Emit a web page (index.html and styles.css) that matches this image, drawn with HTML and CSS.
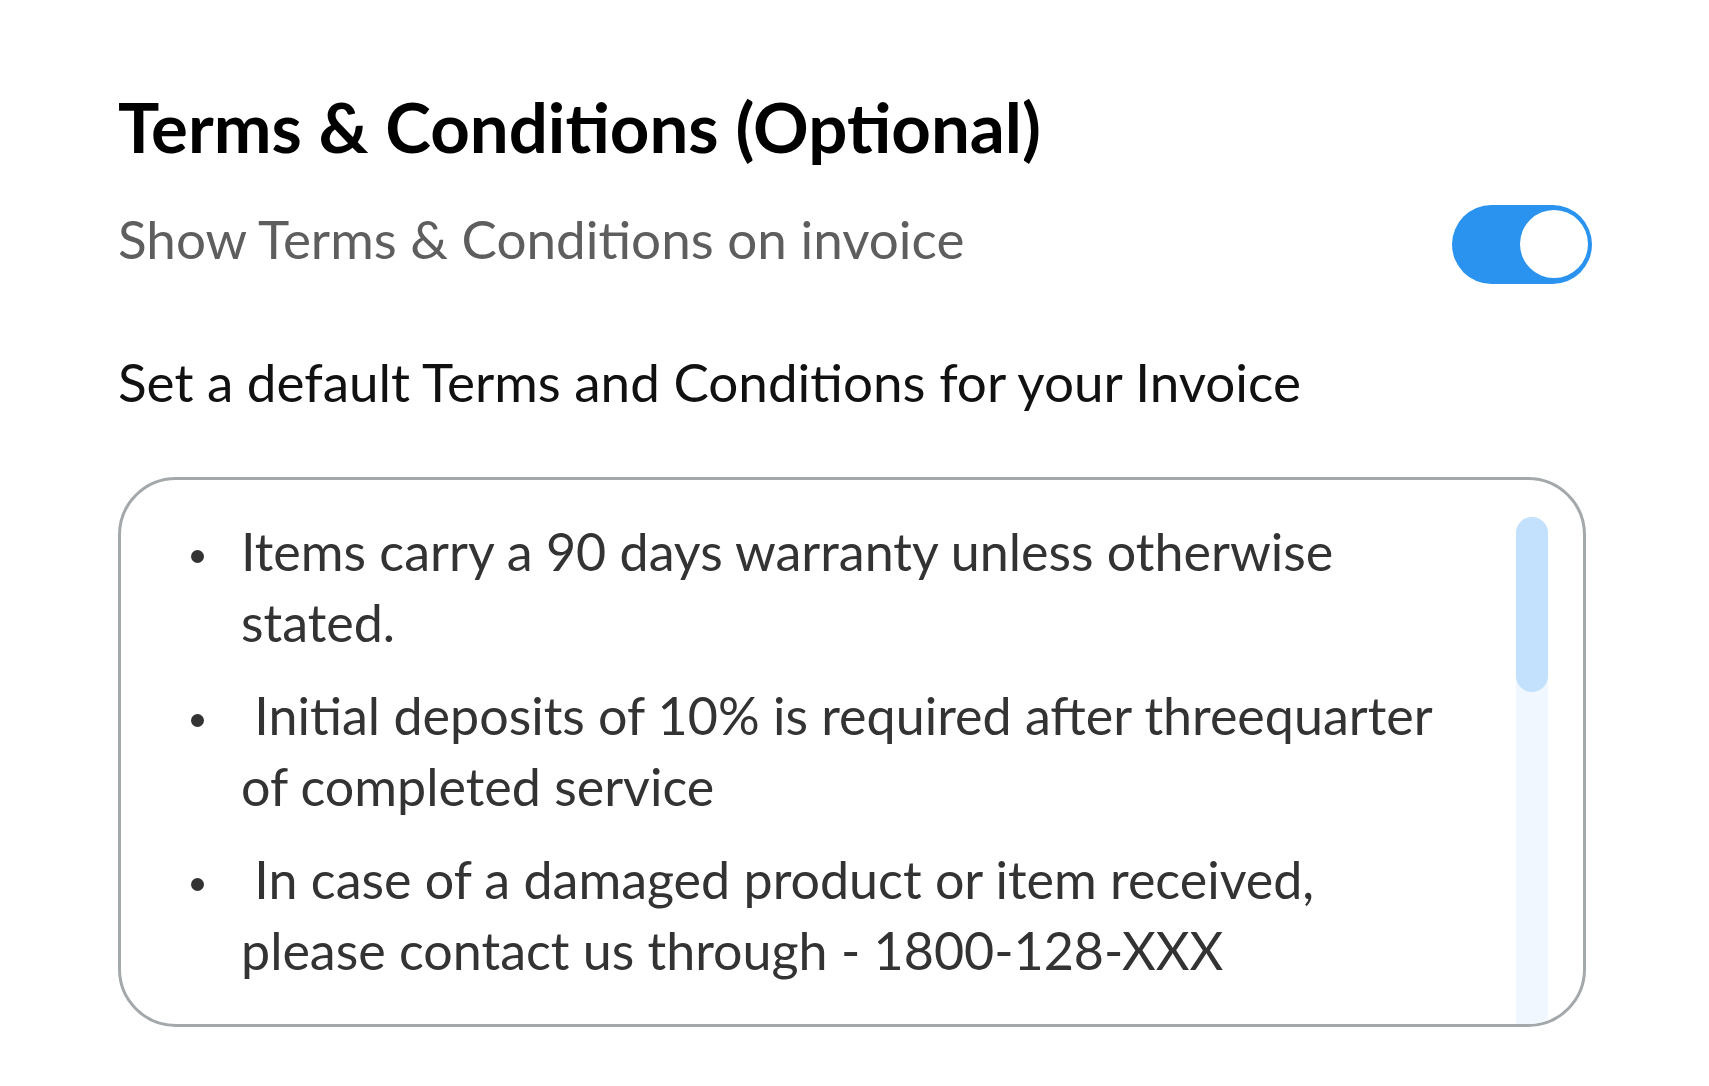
FILE: index.html
```html
<!DOCTYPE html>
<html lang="en">
<head>
<meta charset="utf-8">
<title>Terms &amp; Conditions</title>
<link rel="stylesheet" href="styles.css">
</head>
<body>
<main class="settings">
  <h1 class="title">Terms &amp; Conditions (Optional)</h1>
  <div class="toggle-row">
    <span class="toggle-label">Show Terms &amp; Conditions on invoice</span>
    <span class="switch" role="switch" aria-checked="true"><span class="knob"></span></span>
  </div>
  <p class="hint">Set a default Terms and Conditions for your Invoice</p>
  <div class="terms-box">
    <ul class="terms">
      <li>Items carry a 90 days warranty unless otherwise stated.</li>
      <li> Initial deposits of 10% is required after threequarter of completed service</li>
      <li> In case of a damaged product or item received, please contact us through - 1800-128-XXX</li>
      <li> Goods once sold will not be taken back.</li>
    </ul>
    <div class="scroll-track"><div class="scroll-thumb"></div></div>
  </div>
</main>
</body>
</html>
```
FILE: styles.css
```css
html, body {
  margin: 0;
  padding: 0;
  background: #ffffff;
}

body {
  font-family: Lato, "Noto Sans", "Liberation Sans", sans-serif;
}

.settings {
  width: 1474px;
  padding: 86px 0 0 118px;
}

.title {
  margin: 0;
  font-size: 69px;
  line-height: 1.2;
  font-weight: 700;
  color: #000;
}

.toggle-row {
  margin-top: 36px;
  display: flex;
  align-items: center;
  justify-content: space-between;
  height: 79px;
}

.toggle-label {
  font-size: 53px;
  line-height: 1.2;
  color: #5e5e5e;
  padding-bottom: 11px;
}

.switch {
  display: flex;
  align-items: center;
  justify-content: flex-end;
  box-sizing: border-box;
  width: 140px;
  height: 79px;
  padding-right: 4px;
  border-radius: 40px;
  background: #2a93f0;
}

.knob {
  width: 68px;
  height: 68px;
  border-radius: 50%;
  background: #fff;
}

.hint {
  margin: 66px 0 0;
  font-size: 53px;
  line-height: 1.2;
  color: #111;
}

.terms-box {
  margin-top: 64px;
  width: 1468px;
  height: 550px;
  box-sizing: border-box;
  border: 3px solid #a3a8ab;
  border-radius: 58px;
  overflow: hidden;
  display: flex;
}

.terms {
  flex: 1;
  margin: 0;
  padding: 36px 0 0 70px;
  list-style: none;
}

.terms li {
  display: flex;
  align-items: flex-start;
  margin-bottom: 22px;
  font-size: 52px;
  line-height: 71px;
  color: #333;
  white-space: pre-wrap;
}

.terms li::before {
  content: "";
  flex: none;
  width: 13px;
  height: 13px;
  margin: 34px 37px 0 0;
  border-radius: 50%;
  background: #333;
}

.scroll-track {
  flex: none;
  width: 32px;
  margin: 37px 35px 0 50px;
  border-radius: 16px 16px 0 0;
  background: #f1f7ff;
}

.scroll-thumb {
  height: 175px;
  border-radius: 16px;
  background: #c3e1fd;
}
```
